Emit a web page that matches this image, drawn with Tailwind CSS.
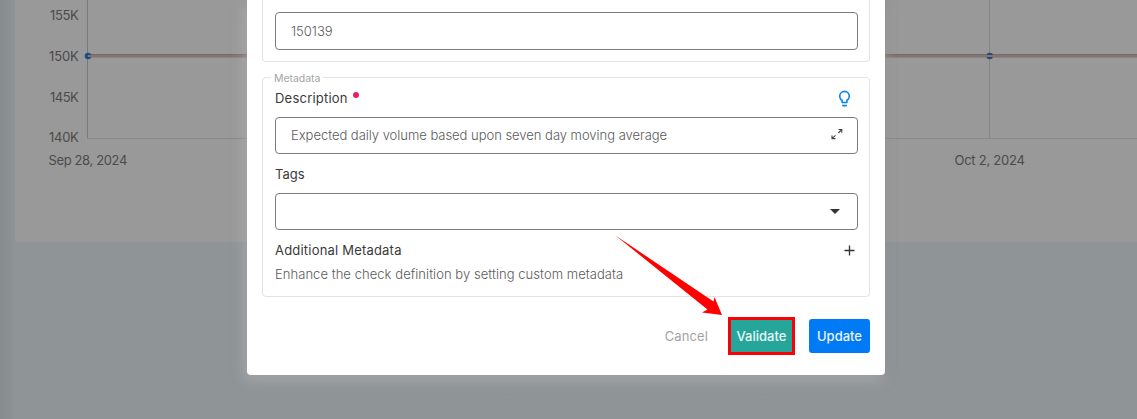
<!DOCTYPE html>
<html lang="en">
<head>
<meta charset="utf-8">
<title>Edit check</title>
<script src="https://cdn.jsdelivr.net/npm/@tailwindcss/browser@4"></script>
</head>
<body class="h-[419px] w-[1137px] overflow-hidden bg-[#8f9496] font-['Inter','Liberation_Sans',sans-serif] text-[13px] text-[#3a3a3a]">
<div class="relative h-[419px] bg-linear-to-r from-[#868b8d] to-[#8f9496] to-[16px] pl-[15px]">
  <main class="h-[242px] rounded-bl-[4px] bg-[#999999]">
    <svg class="block" width="1122" height="242" viewBox="15 0 1122 242" fill="none">
      <path d="M989.5 0V138.5" stroke="#858585"/>
      <path d="M87.5 0V138.5" stroke="#7a7a7a"/>
      <path d="M87 138.5H1137" stroke="#888888"/>
      <path d="M88 54.5H1137" stroke="#56729c"/>
      <path d="M88 57.5H1137" stroke="#7f868f"/>
      <circle cx="88" cy="56" r="3.3" fill="#1f4a8c"/><circle cx="989.700" cy="56" r="3.3" fill="#1f4a8c"/>
      <path d="M88 56H1137" stroke="#987150" stroke-width="2"/>
      <g fill="#4b4b4b" font-size="13" letter-spacing="-0.3">
        <text x="50" y="20" textLength="28.500">155K</text>
        <text x="49" y="61" textLength="29.500">150K</text>
        <text x="50" y="102" textLength="28.500">145K</text>
        <text x="49" y="142" textLength="29.500">140K</text>
        <text x="48.500" y="165" textLength="78.500">Sep 28, 2024</text>
        <text x="954.500" y="165" textLength="70">Oct 2, 2024</text>
      </g>
    </svg>
  </main>

  <section class="absolute left-[247px] top-0 flex h-[375px] w-[638px] flex-col rounded-b-[4px] bg-white px-[15px] shadow-[3px_0_8px_rgba(125,125,125,0.4),-2px_5px_13px_rgba(190,190,190,0.6)]">
    <div class="h-[62px] rounded-b-[4px] border border-t-0 border-[#e3e3e3] pl-3 pr-[11px] pt-3">
      <div class="flex h-[38px] items-center rounded-[4px] border border-[#7c7c7c] px-[15px] pt-px text-[#5a5a5a]"><span class="font-light">150139</span></div>
    </div>

    <fieldset class="mt-[9px] h-[226px] rounded-[4px] border border-[#e3e3e3] pl-3 pr-[11px]">
      <legend class="-ml-[4px] h-[13px] px-[3px] text-[10.500px] leading-[15px] tracking-[-0.04px] text-[#a5a5a5]"><span>Metadata</span></legend>
      <div class="flex h-[33px] justify-between">
        <div class="flex pt-[5px] leading-[18px]"><span class="tracking-[0.22px]">Description</span><i class="ml-[5px] mt-[3px] size-[6px] rounded-full bg-[#e91e63]"></i></div>
        <svg class="mr-[4px] mt-[5px]" width="19" height="19" viewBox="0 0 24 24" fill="#0b82f5"><path d="M12 2A7 7 0 0 1 19 9C19 11.380 17.810 13.470 16 14.740V17A1 1 0 0 1 15 18H9A1 1 0 0 1 8 17V14.740C6.190 13.470 5 11.380 5 9A7 7 0 0 1 12 2M9 21V20H15V21A1 1 0 0 1 14 22H10A1 1 0 0 1 9 21M12 4A5 5 0 0 0 7 9C7 11.050 8.230 12.810 10 13.580V16H14V13.580C15.770 12.810 17 11.050 17 9A5 5 0 0 0 12 4Z"/></svg>
      </div>
      <div class="flex h-[37px] items-center justify-between rounded-[4px] border border-[#7c7c7c] pl-[15px] pr-[14px] text-[#5a5a5a]">
        <span class="font-light tracking-[-0.025px]">Expected daily volume based upon seven day moving average</span>
        <svg class="-mt-[3px]" width="12" height="12" fill="none" stroke="#444" stroke-width="1.100"><path d="M7.500 1.500H10.800V4.800M10.800 1.500L7.300 5M1 7.500V10.600H4.500M1 10.600L4.500 7.300"/></svg>
      </div>
      <div class="h-[39px] pt-[11px] leading-[18px]"><span>Tags</span></div>
      <div class="flex h-[37px] items-center justify-end rounded-[4px] border border-[#7c7c7c] pr-[17px]">
        <svg class="-mt-px" width="10" height="5" fill="#333"><path d="M0 0H10L5 5Z"/></svg>
      </div>
      <div class="flex h-[32px] items-start justify-between pt-[11px] leading-[18px]">
        <span class="tracking-[0.2px]">Additional Metadata</span>
        <svg class="mr-[3px] mt-[4px]" width="11" height="11" stroke="#333" stroke-width="1.300"><path d="M5.500 .5V10.500M.5 5.500H10.500"/></svg>
      </div>
      <div class="pt-[3px] leading-[18px] text-[#5a5a5a]"><span class="font-light tracking-[0.055px]">Enhance the check definition by setting custom metadata</span></div>
    </fieldset>

    <footer class="mt-[20px] flex h-[38px] items-center justify-end">
      <button class="mr-[20px] pt-px text-[#a3a3a3]"><span class="tracking-[0.1px]">Cancel</span></button>
      <button class="flex h-[38px] w-[67px] items-center justify-center border-[3px] border-[#fb0007] bg-[#26a69a] pt-px font-medium text-[#e9f6f5]"><span>Validate</span></button>
      <button class="ml-[14px] flex h-[34px] w-[61px] items-center justify-center rounded-[3px] bg-[#007bf5] pt-px font-medium text-[#e9f3fe]"><span>Update</span></button>
    </footer>
  </section>
  <svg class="absolute left-[610px] top-[230px]" width="120" height="90" viewBox="610 230 120 90" fill="#fe0000"><path d="M615.500 235.500L713.500 301.500L714.500 297L722 315L702 312.500L707.500 309.500Z"/></svg>
</div>
</body>
</html>
